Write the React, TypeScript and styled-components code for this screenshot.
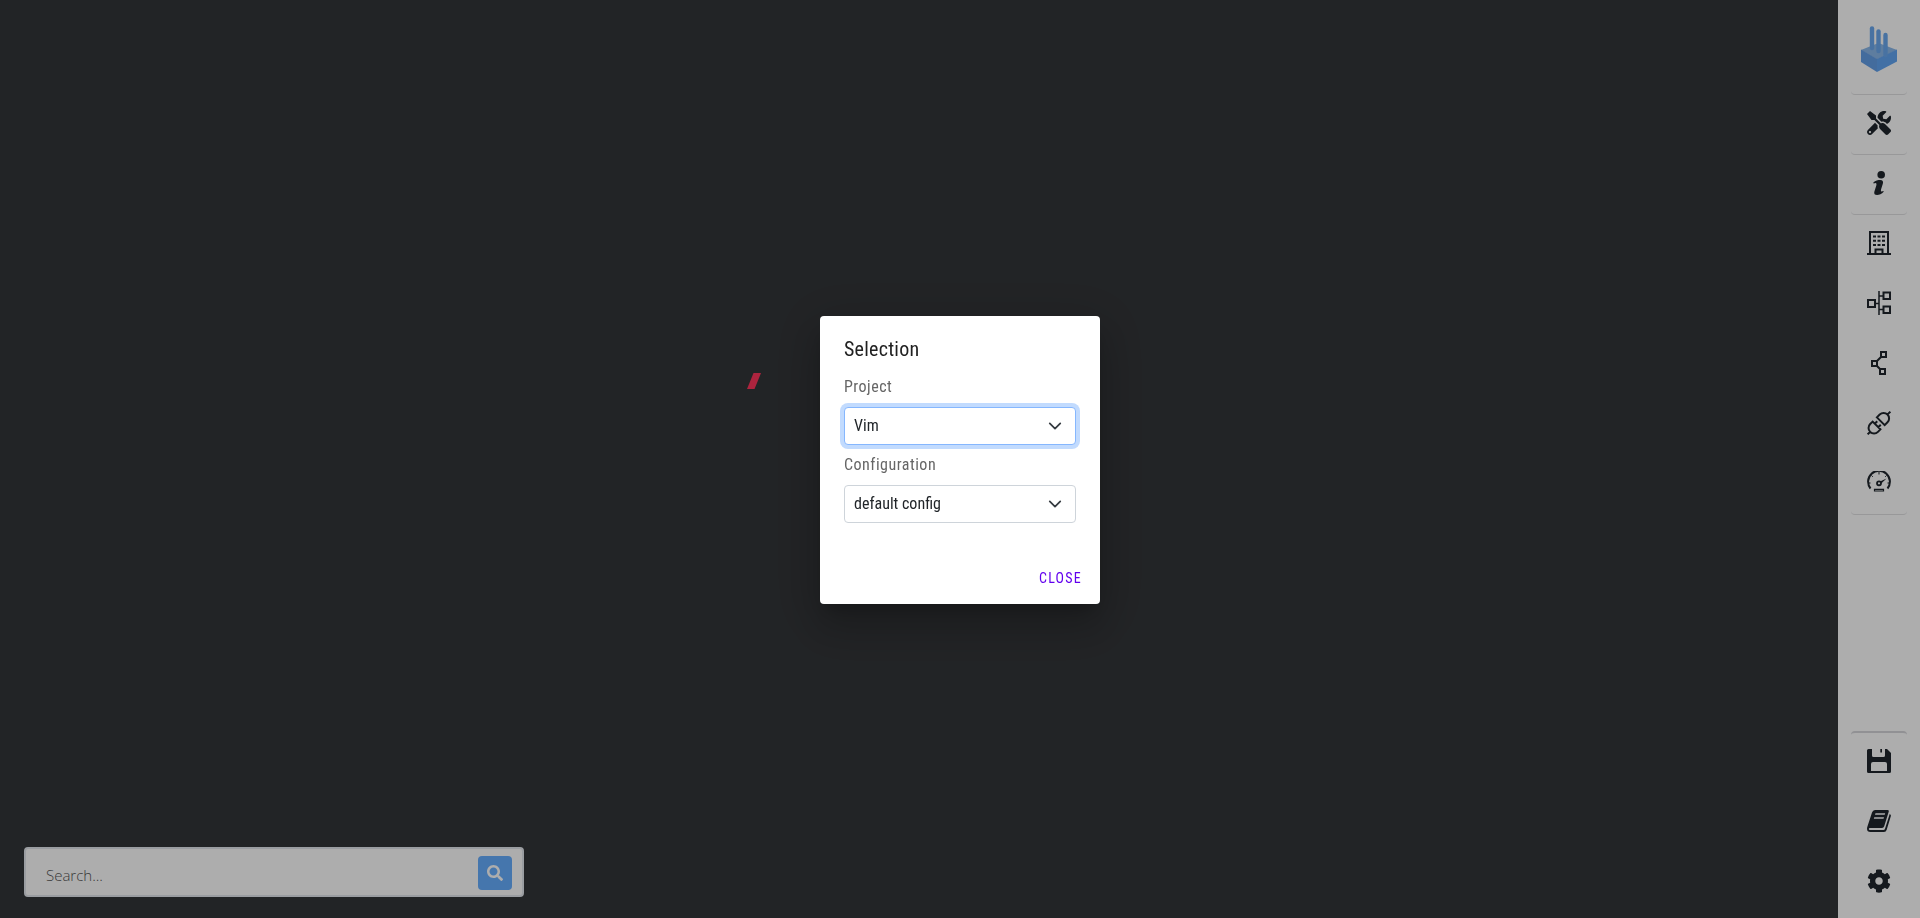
import React, { useState } from "react";
import styled, { createGlobalStyle, css } from "styled-components";
import { FaCog, FaSearch, FaTools } from "react-icons/fa";

const condensed = `"Roboto Condensed", "Liberation Sans Narrow", "Roboto", sans-serif`;

const GlobalStyle = createGlobalStyle`
  *, *::before, *::after { box-sizing: border-box; }
  body { margin: 0; background: #333538; font-family: ${condensed}; }
`;

const Page = styled.div`
  display: flex;
  min-height: 100vh;
`;

const Stage = styled.main`
  position: relative;
  flex: 1;
  display: flex;
  align-items: flex-end;
  padding: 0 24px 21px;
  background: #333538;
`;

const Mark = styled.svg`
  position: absolute;
  left: 747px;
  top: 373px;
`;

const SearchBar = styled.form`
  display: flex;
  align-items: center;
  width: 500px;
  height: 50px;
  padding: 2px 10px 0 20px;
  background: #fff;
  border: 2px solid #e3e8ed;
  border-radius: 4px;
`;

const SearchInput = styled.input`
  flex: 1;
  min-width: 0;
  height: 40px;
  padding: 3px 0 0;
  border: 0;
  outline: 0;
  background: transparent;
  color: #333;
  font: 300 15px "Open Sans", sans-serif;
  &::placeholder { color: #555; opacity: 1; }
`;

const SearchButton = styled.button`
  display: grid;
  place-items: center;
  width: 34px;
  height: 34px;
  padding: 0;
  border: 0;
  border-radius: 4px;
  background: #66aeff;
  color: #fff;
`;

const Sidebar = styled.nav`
  display: flex;
  flex-direction: column;
  width: 82px;
  padding: 0 13px 6px;
  background: #fff;
`;

const line = css`1px solid #e0e0e2`;

const Brand = styled.a`
  display: grid;
  place-items: center;
  height: 95px;
  padding-top: 4px;
  border-bottom: ${line};
  border-radius: 4px;
`;

const Group = styled.div<{ $bottom?: boolean }>`
  display: flex;
  flex-direction: column;
  gap: 1px;
  ${(p) =>
    p.$bottom
      ? css`margin-top: auto; border-top: 2px solid #d6d6da;`
      : css`border-bottom: ${line};`}
  border-radius: 4px;
`;

const Tool = styled.button`
  display: grid;
  place-items: center;
  height: 59px;
  padding: 0 0 4px;
  border: 0;
  background: transparent;
  color: #1f262d;
`;

const Scrim = styled.div`
  position: fixed;
  inset: 0;
  display: grid;
  place-items: center;
  padding-top: 2px;
  background: rgba(0, 0, 0, 0.32);
`;

const Dialog = styled.section`
  display: flex;
  flex-direction: column;
  width: 280px;
  background: #fff;
  border-radius: 4px;
  box-shadow: 0 11px 15px -7px rgba(0, 0, 0, 0.2),
    0 24px 38px 3px rgba(0, 0, 0, 0.14), 0 9px 46px 8px rgba(0, 0, 0, 0.12);
`;

const Title = styled.h2`
  margin: 0;
  padding: 17px 24px 6px;
  font-size: 20px;
  line-height: 32px;
  font-weight: 400;
  letter-spacing: 0.0125em;
  color: #212121;
`;

const Fields = styled.div`
  display: flex;
  flex-direction: column;
  padding: 0 24px 25px;
`;

const Label = styled.label`
  padding: 4px 0 8px;
  font-size: 16px;
  line-height: 24px;
  letter-spacing: 0.03125em;
  color: #666;
`;

const SelectBox = styled.div`
  display: grid;
  align-items: center;
  margin-bottom: 4px;
  > * { grid-area: 1 / 1; }
  > svg {
    justify-self: end;
    margin-right: 14px;
    pointer-events: none;
  }
`;

const Select = styled.select<{ $active?: boolean }>`
  appearance: none;
  width: 100%;
  height: 38px;
  padding: 0 36px 1px 9px;
  border: 1px solid ${(p) => (p.$active ? "#86b7fe" : "#ced4da")};
  border-radius: 4px;
  outline: 0;
  background: #fff;
  color: #212529;
  font: 400 16px ${condensed};
  box-shadow: ${(p) => (p.$active ? "0 0 0 4px #c2dbfe" : "none")};
`;

const Actions = styled.footer`
  display: flex;
  justify-content: flex-end;
  padding: 8px;
`;

const CloseButton = styled.button`
  height: 36px;
  padding: 0 10px 1px;
  border: 0;
  border-radius: 4px;
  background: transparent;
  color: #6200ee;
  font: 400 14px ${condensed};
  letter-spacing: 0.0892857em;
  text-transform: uppercase;
`;

const Glyph = ({ children }: { children: React.ReactNode }) => (
  <svg width="24" height="24" viewBox="0 0 24 24" fill="none" stroke="currentColor" strokeWidth="2" aria-hidden="true">
    {children}
  </svg>
);

const Logo = () => (
  <svg width="38" height="48" viewBox="0 0 38 48" aria-hidden="true">
    <path d="M1 25 18.500 18 37 25 17 34.500Z" fill="#8bb8ea" />
    <path d="M1 24.500 17 34V47L1 37Z" fill="#649fe8" />
    <path d="M17 34 37 24.500V36.500L17 47Z" fill="#62a5f3" />
    <g strokeWidth="4.400" strokeLinecap="round">
      <path d="M12 3.500V23" stroke="#6ba9ef" />
      <path d="M18.500 6.500V26" stroke="#6ba9ef" />
      <path d="M25.500 10V30" stroke="#6ba9ef" />
    </g>
  </svg>
);

const InfoIcon = () => (
  <Glyph>
    <g fill="currentColor" stroke="none">
      <circle cx="14.200" cy="3.800" r="3.800" />
      <path d="M6.300 11.400C8.500 9.400 11 9 13.200 9c2.500 0 3.300 1.500 2.700 3.600l-1.800 5.600c-.4 1.500-.1 2.300.7 2.300.5 0 1-.2 1.600-.5l.3.700c-2 2.300-4.500 3.300-6.600 3.300-2.300 0-3.400-1.300-2.700-3.600l1.900-6c.4-1.500.2-2.400-.8-2.400-.5 0-1.100.2-1.900.5Z" />
    </g>
  </Glyph>
);

const BuildingIcon = () => (
  <Glyph>
    <path d="M3 22V1H21V22M0 23H24M8.500 22V18.500H15.500V22" />
    <path d="M6 5.500H18M6 9.800H18M6 14.100H18" strokeDasharray="3 1.500" />
  </Glyph>
);

const TreeIcon = () => (
  <Glyph>
    <path d="M1 9H8V16H1ZM16.500 1.500H23V8H16.500ZM16.500 15.500H23V22H16.500Z" />
    <path d="M12 0V24M8 12.500H12M12 5H16M12 18.500H16" strokeWidth="1.500" />
  </Glyph>
);

const NodesIcon = () => (
  <Glyph>
    <path d="M14 1H19V6H14ZM5 10H10V15H5ZM13 18H18V23H13Z" />
    <path d="M14 6 10 10M10 15 13 18" />
  </Glyph>
);

const PlugIcon = () => (
  <Glyph>
    <g transform="rotate(-45 12 12)" strokeWidth="2">
      <path d="M-4 12H-.5M24.500 12H28M8.500 6.500H5a5.500 5.500 0 0 0 0 11H8.500ZM14.500 6.500H18.500a5.500 5.500 0 0 1 0 11H14.500ZM8.500 9.500H12M8.500 14.500H12" />
    </g>
  </Glyph>
);

const GaugeIcon = () => (
  <Glyph>
    <path d="M3.500 17.500A10.900 10.900 0 1 1 20.500 17.500" strokeWidth="2" />
    <path d="M12 1V3.500M1 12H3.500M20.500 12H23M4.500 4.500 5.800 5.800M19.500 4.500 18.200 5.800" strokeWidth="1" />
    <circle cx="12" cy="12.300" r="2" strokeWidth="1.800" />
    <path d="M13 10.400 19.500 7.500 14.200 12.500Z" fill="currentColor" stroke="none" />
    <path d="M7.500 18.300H16.500V20H7.500Z" strokeWidth="1.200" />
  </Glyph>
);

const SaveIcon = () => (
  <Glyph>
    <path fill="currentColor" stroke="none" fillRule="evenodd" d="M1.500 0H5V6.500Q5 8 6.500 8H16.500Q18 8 18 6.500V0H20L24 4V22.500Q24 24 22.500 24H1.500Q0 24 0 22.500V1.500Q0 0 1.500 0ZM6 13Q4 13 4 15V22H20V15Q20 13 18 13ZM13.300 0H15V3.500H13.300Z" />
  </Glyph>
);

const BookIcon = () => (
  <Glyph>
    <path fill="currentColor" stroke="none" fillRule="evenodd" d="M8 1H20.500Q22.200 1 21.700 2.800L17.200 17.200Q16.700 19 15 19H3Q1.800 19 1.800 20 1.800 21 3 21H16.500Q17.600 21 18 19.700L22.700 5Q24.300 5.700 23.800 7.300L19.700 20.800Q19 23 17 23H3.500Q0 23 0 19.800 0 18.500.6 17L5 3.500Q5.800 1 8 1ZM8.500 4.200 8 5.800H17.700L18.200 4.200ZM7.300 8.200 6.800 9.800H16.500L17 8.200Z" />
  </Glyph>
);

const viewTools = [
  { name: "Buildings", icon: <BuildingIcon /> },
  { name: "Hierarchy", icon: <TreeIcon /> },
  { name: "Relations", icon: <NodesIcon /> },
  { name: "Connections", icon: <PlugIcon /> },
  { name: "Metrics", icon: <GaugeIcon /> },
];

const fileTools = [
  { name: "Save", icon: <SaveIcon /> },
  { name: "Documentation", icon: <BookIcon /> },
  { name: "Settings", icon: <FaCog size={24} /> },
];

const Chevron = () => (
  <svg width="14" height="14" viewBox="0 0 16 16" fill="none" stroke="#343a40" strokeWidth="2" strokeLinecap="round" strokeLinejoin="round" aria-hidden="true">
    <path d="m2 5 6 6 6-6" />
  </svg>
);

export default function App() {
  const [open, setOpen] = useState(true);
  return (
    <>
      <GlobalStyle />
      <Page>
        <Stage>
          <Mark width="14" height="16" viewBox="0 0 14 16" aria-hidden="true">
            <path d="M6.500 0H14L7.500 16H0Z" fill="#ff355c" />
          </Mark>
          <SearchBar onSubmit={(e) => e.preventDefault()}>
            <SearchInput type="text" placeholder="Search..." aria-label="Search" />
            <SearchButton type="submit" aria-label="Run search">
              <FaSearch size={16} />
            </SearchButton>
          </SearchBar>
        </Stage>
        <Sidebar>
          <Brand href="#" aria-label="Home"><Logo /></Brand>
          <Group><Tool aria-label="Tools"><FaTools size={24} /></Tool></Group>
          <Group><Tool aria-label="Information"><InfoIcon /></Tool></Group>
          <Group>
            {viewTools.map((t) => <Tool key={t.name} aria-label={t.name}>{t.icon}</Tool>)}
          </Group>
          <Group $bottom>
            {fileTools.map((t) => <Tool key={t.name} aria-label={t.name}>{t.icon}</Tool>)}
          </Group>
        </Sidebar>
      </Page>
      {open && (
        <Scrim>
          <Dialog role="dialog" aria-modal="true" aria-labelledby="selection-title">
            <Title id="selection-title">Selection</Title>
            <Fields>
              <Label htmlFor="project">Project</Label>
              <SelectBox>
                <Select id="project" $active><option>Vim</option></Select>
                <Chevron />
              </SelectBox>
              <Label htmlFor="configuration">Configuration</Label>
              <SelectBox>
                <Select id="configuration"><option>default config</option></Select>
                <Chevron />
              </SelectBox>
            </Fields>
            <Actions>
              <CloseButton type="button" onClick={() => setOpen(false)}>Close</CloseButton>
            </Actions>
          </Dialog>
        </Scrim>
      )}
    </>
  );
}
